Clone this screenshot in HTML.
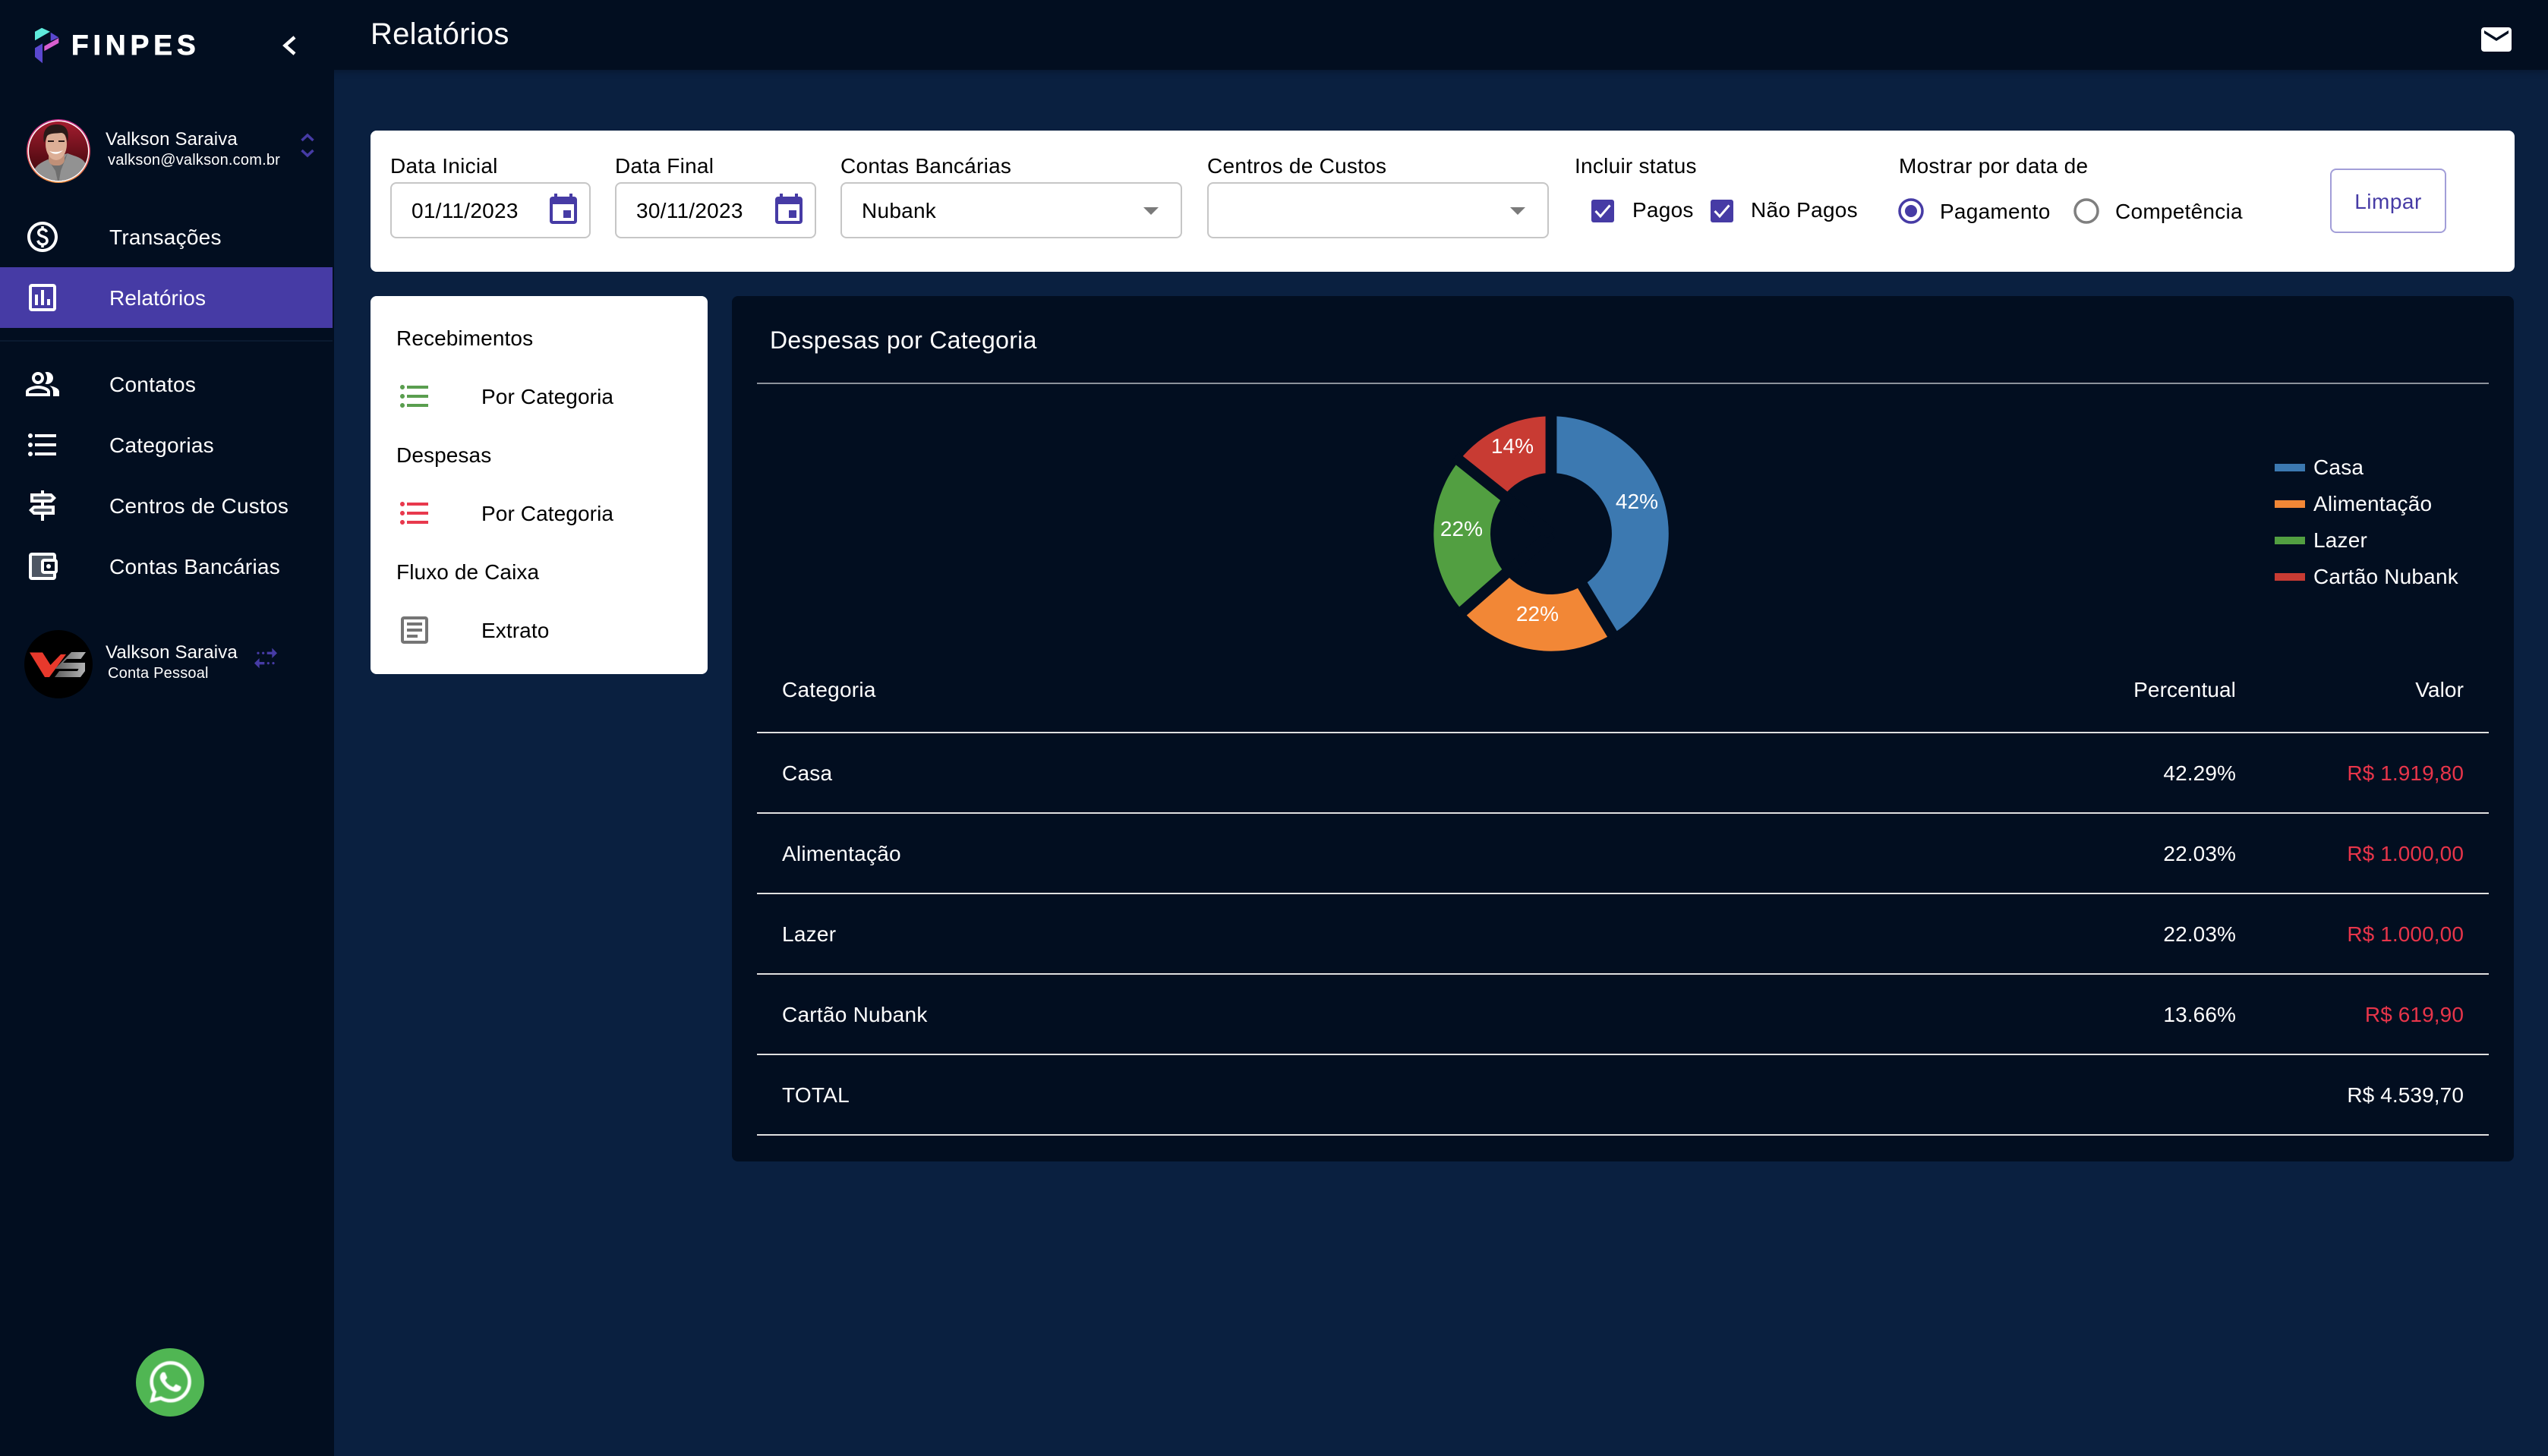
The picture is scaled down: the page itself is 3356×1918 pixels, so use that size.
<!DOCTYPE html>
<html lang="pt-BR"><head><meta charset="utf-8"><title>Relatórios</title>
<style>
html,body{margin:0;padding:0}
body{position:relative;width:3356px;height:1918px;overflow:hidden;background:#0a2040;font-family:"Liberation Sans",Arial,sans-serif;color:#fff}
.a{position:absolute}
.t{position:absolute;font-size:28px;line-height:40px;white-space:nowrap;letter-spacing:.1px}
.n{letter-spacing:.25px}
.k{color:#000;letter-spacing:.26px}
.m{color:#000;letter-spacing:.1px}
.r{text-align:right}
.red{color:#e8354a}
.box{position:absolute;top:240px;height:74px;box-sizing:border-box;border:2px solid #c6c6c6;border-radius:8px;background:#fff}
.line{position:absolute;left:997px;width:2281px;height:2px;background:#e0e0e0}
svg{position:absolute;overflow:visible}
</style></head><body>

<!-- header + sidebar -->
<div class="a" style="left:0;top:0;width:3356px;height:92px;background:#020e20;box-shadow:0 3px 8px rgba(0,0,0,.25)"></div>
<div class="a" style="left:0;top:0;width:440px;height:1918px;background:#020e20"></div>
<div class="t" style="left:488px;top:21px;font-size:40px;line-height:48px;letter-spacing:.25px">Relatórios</div>
<svg style="left:3264px;top:28px" width="48" height="48" viewBox="0 0 24 24"><path fill="#fff" d="M20 4H4c-1.1 0-1.99.9-1.99 2L2 18c0 1.1.9 2 2 2h16c1.1 0 2-.9 2-2V6c0-1.1-.9-2-2-2zm0 4l-8 5-8-5V6l8 5 8-5v2z"/></svg>

<!-- logo -->
<svg style="left:0;top:0" width="100" height="100" viewBox="0 0 100 100">
<polygon fill="#5eeadb" points="46,41.7 55,36.7 66,41.7 46,53.3"/>
<polygon fill="#5a48cf" points="66.7,42.7 77.3,49.3 66.7,54.3"/>
<polygon fill="#d95fd0" points="58.3,60.7 77.3,50 77.3,56.7 58.3,67.3"/>
<polygon fill="#5a48cf" points="46,63.3 56,57.3 56,83.3 46,75"/>
</svg>
<div class="t" style="left:94px;top:40px;font-size:37px;font-weight:bold;letter-spacing:6px;line-height:40px;-webkit-text-stroke:.8px #fff">FINPES</div>
<svg style="left:0;top:0" width="440" height="100"><path d="M388 49 L375.500 60 L388 71" fill="none" stroke="#fff" stroke-width="4.500"/></svg>

<!-- avatar -->
<svg style="left:33px;top:155px" width="88" height="88" viewBox="0 0 88 88">
<defs>
<linearGradient id="rg" x1="0" y1="0" x2="0" y2="1"><stop offset="0" stop-color="#c9308f"/><stop offset=".55" stop-color="#d8405a"/><stop offset="1" stop-color="#f09040"/></linearGradient>
<linearGradient id="bg" x1="0" y1="0" x2="0" y2="1"><stop offset="0" stop-color="#ab1f32"/><stop offset=".6" stop-color="#5e0d16"/><stop offset="1" stop-color="#3a0a0e"/></linearGradient>
<clipPath id="av"><circle cx="44" cy="44" r="39"/></clipPath>
</defs>
<circle cx="44" cy="44" r="42" fill="url(#rg)"/><circle cx="44" cy="44" r="40.500" fill="#fff"/>
<g clip-path="url(#av)">
<rect width="88" height="88" fill="url(#bg)"/>
<path d="M8 88 C9 68 14 62 30 55 L56 47 C68 52 78 52 82 66 L84 88 Z" fill="#929292"/>
<path d="M30 55 L40 70 L44 88 L47 70 L56 47 L50 56 H36 Z" fill="#6f6f6f"/>
<rect x="31" y="44" width="21" height="19" rx="8" fill="#c09078"/>
<ellipse cx="41" cy="35" rx="14" ry="21" fill="#dcae96"/>
<path d="M25 33 C22 14 31 9 42 9 C54 9 59 17 56 33 C55 26 53 21 48 20 C40 21 33 20 29 24 C27 27 27 30 25 33Z" fill="#2a1a18"/>
<path d="M32 44 Q41 52 50 43 Q41 47 32 44Z" fill="#fff"/>
<rect x="30" y="30" width="8" height="2" fill="#2a1a18"/><rect x="44" y="30" width="8" height="2" fill="#2a1a18"/>
</g></svg>
<div class="t" style="left:139px;top:164px;font-size:24px;letter-spacing:.15px">Valkson Saraiva</div>
<div class="t" style="left:142px;top:191px;font-size:20px;letter-spacing:.2px">valkson@valkson.com.br</div>
<svg style="left:395px;top:174px" width="20" height="36"><path d="M2.500 11 L10 4 L17.500 11 M2.500 24 L10 31 L17.500 24" fill="none" stroke="#463ba5" stroke-width="3.500"/></svg>

<!-- nav -->
<div class="a" style="left:0;top:352px;width:438px;height:80px;background:#463ba5"></div>
<div class="a" style="left:0;top:448px;width:438px;height:2px;background:#0a1a30"></div>

<svg style="left:32px;top:288px" width="48" height="48" viewBox="0 0 24 24" fill="#fff"><path d="M12 2C6.480 2 2 6.480 2 12s4.480 10 10 10 10-4.480 10-10S17.520 2 12 2zm0 18c-4.410 0-8-3.590-8-8s3.590-8 8-8 8 3.590 8 8-3.590 8-8 8z"/><path d="M12.890 11.100c-1.780-.59-2.640-.96-2.640-1.900 0-1.020 1.110-1.390 1.810-1.390 1.310 0 1.790.99 1.900 1.340l1.580-.67c-.15-.44-.82-1.910-2.660-2.230V5h-1.750v1.260c-2.600.56-2.620 2.850-2.620 2.960 0 2.270 2.250 2.910 3.350 3.310 1.580.56 2.280 1.070 2.280 2.030 0 1.130-1.050 1.610-1.980 1.610-1.820 0-2.340-1.870-2.400-2.090l-1.660.67c.63 2.190 2.280 2.780 3.020 2.960V19h1.750v-1.240c.52-.09 3.020-.59 3.020-3.220.01-1.390-.62-2.610-3-3.440z"/></svg>
<div class="t n" style="left:144px;top:293px">Transações</div>

<svg style="left:32px;top:368px" width="48" height="48" viewBox="0 0 24 24" fill="#fff"><path d="M19 3H5c-1.100 0-2 .9-2 2v14c0 1.100.9 2 2 2h14c1.100 0 2-.9 2-2V5c0-1.100-.9-2-2-2zm0 16H5V5h14v14z"/><path d="M7 10h2v7H7zM11 7h2v10h-2zM15 13h2v4h-2z"/></svg>
<div class="t" style="left:144px;top:373px">Relatórios</div>

<svg style="left:32px;top:482px" width="48" height="48" viewBox="0 0 24 24" fill="#fff"><path d="M16.670 13.130C18.040 14.060 19 15.320 19 17v3h4v-3c0-2.180-3.570-3.470-6.330-3.870z"/><path d="M15 12c2.210 0 4-1.790 4-4s-1.790-4-4-4c-.47 0-.91.1-1.330.24C14.500 5.270 15 6.580 15 8s-.5 2.730-1.330 3.760c.42.14.86.24 1.330.24z"/><path d="M9 12c2.210 0 4-1.790 4-4s-1.790-4-4-4-4 1.790-4 4 1.790 4 4 4zm0-6c1.100 0 2 .9 2 2s-.9 2-2 2-2-.9-2-2 .9-2 2-2z"/><path d="M9 13c-2.670 0-8 1.340-8 4v3h16v-3c0-2.660-5.330-4-8-4zm6 5H3v-.99C3.200 16.290 6.300 15 9 15s5.800 1.290 6 2v1z"/></svg>
<div class="t n" style="left:144px;top:487px">Contatos</div>

<svg style="left:32px;top:562px" width="48" height="48" viewBox="0 0 24 24" fill="#fff"><path d="M4 10.500c-.83 0-1.500.67-1.500 1.500s.67 1.500 1.500 1.500 1.500-.67 1.500-1.500-.67-1.500-1.500-1.500zm0-6c-.83 0-1.500.67-1.500 1.500S3.170 7.500 4 7.500 5.500 6.830 5.500 6 4.830 4.500 4 4.500zm0 12c-.83 0-1.500.68-1.500 1.500s.68 1.500 1.500 1.500 1.500-.68 1.500-1.500-.67-1.500-1.500-1.500zM7 19h14v-2H7v2zm0-6h14v-2H7v2zm0-8v2h14V5H7z"/></svg>
<div class="t n" style="left:144px;top:567px">Categorias</div>

<svg style="left:32px;top:642px" width="48" height="48" viewBox="0 0 24 24" fill="#fff"><path opacity=".3" d="M6 6h11.170l1 1-1 1H6V6zm12 10H6.830l-1-1 1-1H18v2z"/><path d="M13 10h5l3-3-3-3h-5V2h-2v2H4v6h7v2H6l-3 3 3 3h5v4h2v-4h7v-6h-7v-2zM6 6h11.170l1 1-1 1H6V6zm12 10H6.830l-1-1 1-1H18v2z"/></svg>
<div class="t n" style="left:144px;top:647px">Centros de Custos</div>

<svg style="left:32px;top:722px" width="48" height="48" viewBox="0 0 24 24" fill="#fff"><path opacity=".3" d="M13 17c-1.100 0-2-.9-2-2V9c0-1.100.9-2 2-2h6V5H5v14h14v-2h-6z"/><path d="M21 7.280V5c0-1.100-.9-2-2-2H5c-1.110 0-2 .9-2 2v14c0 1.100.89 2 2 2h14c1.100 0 2-.9 2-2v-2.280c.59-.35 1-.98 1-1.720V9c0-.74-.41-1.380-1-1.720zM20 9v6h-7V9h7zM5 19V5h14v2h-6c-1.100 0-2 .9-2 2v6c0 1.100.9 2 2 2h6v2H5z"/><circle cx="16" cy="12" r="1.500"/></svg>
<div class="t n" style="left:144px;top:727px">Contas Bancárias</div>

<!-- account -->
<svg style="left:32px;top:830px" width="90" height="90" viewBox="32 830 90 90">
<defs><linearGradient id="sg" x1="0" y1="0" x2="1" y2="0"><stop offset="0" stop-color="#5c5c5c"/><stop offset="1" stop-color="#b5b5b5"/></linearGradient></defs>
<circle cx="77" cy="875" r="45" fill="#000"/>
<polygon fill="#e8392c" points="39,859.500 56,859.500 66.500,876 80,862 87,862 65,892 59,892"/>
<path fill="url(#sg)" d="M94 859 H113 L106.500 868 H88 L83 873 H112 V884 L106 892 H72 L78 884 H102 L103.500 881 H72.500 Z"/>
</svg>
<div class="t" style="left:139px;top:840px;font-size:24px;letter-spacing:.15px">Valkson Saraiva</div>
<div class="t" style="left:142px;top:867px;font-size:20px;letter-spacing:.2px">Conta Pessoal</div>
<svg style="left:330px;top:847px" width="40" height="40" viewBox="0 0 24 24" fill="#463ba5"><path d="M17 4l4 4-4 4V9h-4V7h4V4zm-7 3c-.55 0-1 .45-1 1s.45 1 1 1 1-.45 1-1-.45-1-1-1zm-4 0c-.55 0-1 .45-1 1s.45 1 1 1 1-.45 1-1-.45-1-1-1zm1 10h4v-2H7v-3l-4 4 4 4v-3zm7 0c.55 0 1-.45 1-1s-.45-1-1-1-1 .45-1 1 .45 1 1 1zm4 0c.55 0 1-.45 1-1s-.45-1-1-1-1 .45-1 1 .45 1 1 1z"/></svg>

<!-- whatsapp -->
<div class="a" style="left:179px;top:1776px;width:90px;height:90px;border-radius:50%;background:#50b653"></div>
<svg style="left:196.500px;top:1793px;filter:blur(.6px)" width="55" height="55" viewBox="0 0 24 24"><path fill="#fff" d="M17.472 14.382c-.297-.149-1.758-.867-2.030-.967-.273-.099-.471-.148-.67.15-.197.297-.767.966-.94 1.164-.173.199-.347.223-.644.075-.297-.15-1.255-.463-2.390-1.475-.883-.788-1.480-1.761-1.653-2.059-.173-.297-.018-.458.13-.606.134-.133.298-.347.446-.52.149-.174.198-.298.298-.497.099-.198.05-.371-.025-.52-.075-.149-.669-1.612-.916-2.207-.242-.579-.487-.5-.669-.51-.173-.008-.371-.01-.57-.01-.198 0-.52.074-.792.372-.272.297-1.040 1.016-1.040 2.479 0 1.462 1.065 2.875 1.213 3.074.149.198 2.096 3.200 5.077 4.487.709.306 1.262.489 1.694.625.712.227 1.360.195 1.871.118.571-.085 1.758-.719 2.006-1.413.248-.694.248-1.289.173-1.413-.074-.124-.272-.198-.57-.347m-5.421 7.403h-.004a9.870 9.870 0 01-5.031-1.378l-.361-.214-3.741.982.998-3.648-.235-.374a9.860 9.860 0 01-1.510-5.260c.001-5.450 4.436-9.884 9.888-9.884 2.640 0 5.122 1.030 6.988 2.898a9.825 9.825 0 012.893 6.994c-.003 5.450-4.437 9.884-9.885 9.884m8.413-18.297A11.815 11.815 0 0012.050 0C5.495 0 .16 5.335.157 11.892c0 2.096.547 4.142 1.588 5.945L.057 24l6.305-1.654a11.882 11.882 0 005.683 1.448h.005c6.554 0 11.890-5.335 11.893-11.893a11.821 11.821 0 00-3.480-8.413z"/></svg>

<!-- filter card -->
<div class="a" style="left:488px;top:172px;width:2824px;height:186px;background:#fff;border-radius:8px"></div>
<div class="t k" style="left:514px;top:199px">Data Inicial</div>
<div class="box" style="left:514px;width:264px"></div>
<div class="t k" style="left:542px;top:258px">01/11/2023</div>
<svg style="left:718px;top:253px" width="48" height="48" viewBox="0 0 24 24"><path fill="#463ba5" d="M17 12h-5v5h5v-5zM16 1v2H8V1H6v2H5c-1.110 0-1.990.9-1.990 2L3 19c0 1.100.89 2 2 2h14c1.100 0 2-.9 2-2V5c0-1.100-.9-2-2-2h-1V1h-2zm3 18H5V8h14v11z"/></svg>
<div class="t k" style="left:810px;top:199px">Data Final</div>
<div class="box" style="left:810px;width:265px"></div>
<div class="t k" style="left:838px;top:258px">30/11/2023</div>
<svg style="left:1015px;top:253px" width="48" height="48" viewBox="0 0 24 24"><path fill="#463ba5" d="M17 12h-5v5h5v-5zM16 1v2H8V1H6v2H5c-1.110 0-1.990.9-1.990 2L3 19c0 1.100.89 2 2 2h14c1.100 0 2-.9 2-2V5c0-1.100-.9-2-2-2h-1V1h-2zm3 18H5V8h14v11z"/></svg>

<div class="t k" style="left:1107px;top:199px">Contas Bancárias</div>
<div class="box" style="left:1107px;width:450px"></div>
<div class="t k" style="left:1135px;top:258px">Nubank</div>
<svg style="left:1506px;top:272px" width="20" height="12"><polygon points="0,1 20,1 10,11" fill="#7a7a7a"/></svg>
<div class="t k" style="left:1590px;top:199px">Centros de Custos</div>
<div class="box" style="left:1590px;width:450px"></div>
<svg style="left:1989px;top:272px" width="20" height="12"><polygon points="0,1 20,1 10,11" fill="#7a7a7a"/></svg>

<div class="t k" style="left:2074px;top:199px">Incluir status</div>
<div class="a" style="left:2096px;top:263px;width:30px;height:30px;border-radius:3px;background:#463ba5"></div>
<svg style="left:2096px;top:263px" width="30" height="30"><path d="M5.500 15 L12 22 L24.500 7.500" fill="none" stroke="#fff" stroke-width="3"/></svg>
<div class="t k" style="left:2150px;top:257px">Pagos</div>
<div class="a" style="left:2253px;top:263px;width:30px;height:30px;border-radius:3px;background:#463ba5"></div>
<svg style="left:2253px;top:263px" width="30" height="30"><path d="M5.500 15 L12 22 L24.500 7.500" fill="none" stroke="#fff" stroke-width="3"/></svg>
<div class="t k" style="left:2306px;top:257px">Não Pagos</div>

<div class="t k" style="left:2501px;top:199px">Mostrar por data de</div>
<svg style="left:2498px;top:258px" width="40" height="40"><circle cx="19" cy="20" r="15" fill="none" stroke="#463ba5" stroke-width="3.500"/><circle cx="19" cy="20" r="8" fill="#463ba5"/></svg>
<div class="t k" style="left:2555px;top:259px">Pagamento</div>
<svg style="left:2728px;top:258px" width="40" height="40"><circle cx="20" cy="20" r="15" fill="none" stroke="#7f7f7f" stroke-width="3.500"/></svg>
<div class="t k" style="left:2786px;top:259px">Competência</div>
<div class="a" style="left:3069px;top:222px;width:153px;height:85px;box-sizing:border-box;border:2px solid #a29ed8;border-radius:8px"></div>
<div class="t" style="left:3069px;top:246px;width:153px;text-align:center;color:#463ba5;letter-spacing:.5px">Limpar</div>

<!-- side menu -->
<div class="a" style="left:488px;top:390px;width:444px;height:498px;background:#fff;border-radius:8px"></div>
<div class="t m" style="left:522px;top:426px">Recebimentos</div>
<svg style="left:522px;top:498px" width="48" height="48" viewBox="0 0 24 24"><path fill="#5a9e4f" d="M4 10.500c-.83 0-1.500.67-1.500 1.500s.67 1.500 1.500 1.500 1.500-.67 1.500-1.500-.67-1.500-1.500-1.500zm0-6c-.83 0-1.500.67-1.500 1.500S3.170 7.500 4 7.500 5.500 6.830 5.500 6 4.830 4.500 4 4.500zm0 12c-.83 0-1.500.68-1.500 1.500s.68 1.500 1.500 1.500 1.500-.68 1.500-1.500-.67-1.500-1.500-1.500zM7 19h14v-2H7v2zm0-6h14v-2H7v2zm0-8v2h14V5H7z"/></svg>
<div class="t m" style="left:634px;top:503px">Por Categoria</div>
<div class="t m" style="left:522px;top:580px">Despesas</div>
<svg style="left:522px;top:652px" width="48" height="48" viewBox="0 0 24 24"><path fill="#e8394d" d="M4 10.500c-.83 0-1.500.67-1.500 1.500s.67 1.500 1.500 1.500 1.500-.67 1.500-1.500-.67-1.500-1.500-1.500zm0-6c-.83 0-1.500.67-1.500 1.500S3.170 7.500 4 7.500 5.500 6.830 5.500 6 4.830 4.500 4 4.500zm0 12c-.83 0-1.500.68-1.500 1.500s.68 1.500 1.500 1.500 1.500-.68 1.500-1.500-.67-1.500-1.500-1.500zM7 19h14v-2H7v2zm0-6h14v-2H7v2zm0-8v2h14V5H7z"/></svg>
<div class="t m" style="left:634px;top:657px">Por Categoria</div>
<div class="t m" style="left:522px;top:734px">Fluxo de Caixa</div>
<svg style="left:522px;top:806px" width="48" height="48" viewBox="0 0 24 24" fill="#757575"><path d="M19 5v14H5V5h14m0-2H5c-1.100 0-2 .9-2 2v14c0 1.100.9 2 2 2h14c1.100 0 2-.9 2-2V5c0-1.100-.9-2-2-2z"/><path d="M14 17H7v-2h7v2zm3-4H7v-2h10v2zm0-4H7V7h10v2z"/></svg>
<div class="t m" style="left:634px;top:811px">Extrato</div>

<!-- report panel -->
<div class="a" style="left:964px;top:390px;width:2347px;height:1140px;background:#020e20;border-radius:8px"></div>
<div class="t" style="left:1014px;top:428px;font-size:32px;letter-spacing:.3px">Despesas por Categoria</div>
<div class="a" style="left:997px;top:504px;width:2281px;height:2px;background:#8c929b"></div>

<!-- donut: centre 2043,703 -->
<svg style="left:1880px;top:540px" width="326" height="326" viewBox="-163 -163 326 326">
<path fill="#3c79b1" d="M0 -154.700 A154.700 154.700 0 0 1 80.400 132.200 L41.600 68.300 A80 80 0 0 0 0 -80 Z"/>
<path fill="#f28736" d="M80.400 132.200 A154.700 154.700 0 0 1 -116.200 102.100 L-60.100 52.800 A80 80 0 0 0 41.600 68.300 Z"/>
<path fill="#529f41" d="M-116.200 102.100 A154.700 154.700 0 0 1 -120.900 -96.500 L-62.500 -49.900 A80 80 0 0 0 -60.100 52.800 Z"/>
<path fill="#c83b33" d="M-120.900 -96.500 A154.700 154.700 0 0 1 0 -154.700 L0 -80 A80 80 0 0 0 -62.500 -49.900 Z"/>
<g stroke="#020e20" stroke-width="14.800">
<line x1="0" y1="0" x2="0" y2="-162"/>
<line x1="0" y1="0" x2="84.300" y2="138.500"/>
<line x1="0" y1="0" x2="-121.700" y2="106.900"/>
<line x1="0" y1="0" x2="-126.600" y2="-101"/>
</g></svg>
<div class="t" style="left:2115px;top:641px;width:82px;text-align:center">42%</div>
<div class="t" style="left:1951px;top:568px;width:82px;text-align:center">14%</div>
<div class="t" style="left:1884px;top:677px;width:82px;text-align:center">22%</div>
<div class="t" style="left:1984px;top:789px;width:82px;text-align:center">22%</div>

<!-- legend -->
<div class="a" style="left:2996px;top:611px;width:40px;height:10px;background:#3c79b1"></div>
<div class="a" style="left:2996px;top:659px;width:40px;height:10px;background:#f28736"></div>
<div class="a" style="left:2996px;top:707px;width:40px;height:10px;background:#529f41"></div>
<div class="a" style="left:2996px;top:755px;width:40px;height:10px;background:#c83b33"></div>
<div class="t" style="left:3047px;top:596px;letter-spacing:.2px">Casa</div>
<div class="t" style="left:3047px;top:644px;letter-spacing:.2px">Alimentação</div>
<div class="t" style="left:3047px;top:692px;letter-spacing:.2px">Lazer</div>
<div class="t" style="left:3047px;top:740px;letter-spacing:.2px">Cartão Nubank</div>

<!-- table -->
<div class="t n" style="left:1030px;top:889px">Categoria</div>
<div class="t r" style="right:411px;top:889px">Percentual</div>
<div class="t r" style="right:111px;top:889px">Valor</div>
<div class="line" style="top:964px"></div>
<div class="t n" style="left:1030px;top:999px">Casa</div>
<div class="t r" style="right:411px;top:999px">42.29%</div>
<div class="t r red" style="right:111px;top:999px">R$ 1.919,80</div>
<div class="line" style="top:1070px"></div>
<div class="t n" style="left:1030px;top:1105px">Alimentação</div>
<div class="t r" style="right:411px;top:1105px">22.03%</div>
<div class="t r red" style="right:111px;top:1105px">R$ 1.000,00</div>
<div class="line" style="top:1176px"></div>
<div class="t n" style="left:1030px;top:1211px">Lazer</div>
<div class="t r" style="right:411px;top:1211px">22.03%</div>
<div class="t r red" style="right:111px;top:1211px">R$ 1.000,00</div>
<div class="line" style="top:1282px"></div>
<div class="t n" style="left:1030px;top:1317px">Cartão Nubank</div>
<div class="t r" style="right:411px;top:1317px">13.66%</div>
<div class="t r red" style="right:111px;top:1317px">R$ 619,90</div>
<div class="line" style="top:1388px"></div>
<div class="t n" style="left:1030px;top:1423px">TOTAL</div>
<div class="t r" style="right:111px;top:1423px">R$ 4.539,70</div>
<div class="line" style="top:1494px"></div>
</body></html>
